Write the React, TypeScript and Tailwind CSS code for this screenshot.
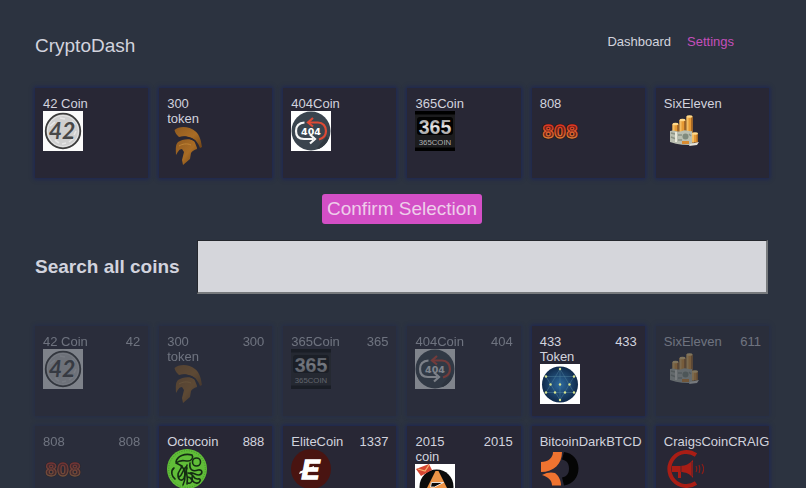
import type { ReactNode } from "react";

type Coin = { name: string; symbol: string; icon: ReactNode; chosen?: boolean };

function FortyTwo() {
  return (
    <svg viewBox="0 0 40 40" className="block size-10" aria-hidden="true">
      <rect width="40" height="40" fill="#fbfbfb" />
      <circle cx="20" cy="20" r="17.3" fill="#cfcfcf" stroke="#3c3c3c" strokeWidth="1.8" />
      <circle cx="20" cy="20" r="15.6" fill="none" stroke="#e8e8e8" strokeWidth="0.8" />
      <path d="M7 15l5-4M12 29l4 3M26 31l5-4M29 10l3 4M17 7l5 1M19 33l4-1M33 20l-2 4" stroke="#e6e6e6" strokeWidth="1.6" />
      <text x="19" y="28" textAnchor="middle" fontFamily="Lato, 'Liberation Sans', sans-serif" fontStyle="italic" fontWeight="700" fontSize="23" fill="#484848">42</text>
    </svg>
  );
}

function Spartan() {
  return (
    <svg viewBox="0 0 40 40" className="block size-10" aria-hidden="true">
      <defs>
        <linearGradient id="bronze" x1="0" y1="0" x2="1" y2="1">
          <stop offset="0" stopColor="#8f5a20" />
          <stop offset="0.55" stopColor="#a96c25" />
          <stop offset="1" stopColor="#6d4215" />
        </linearGradient>
      </defs>
      <path d="M7.500 4C12 0 22 0 28 5c5 4 6 10 7 16l-2 1c-2-5-4-8-8-10-5-2-9-2-13-1C10 9 8 7 7.500 4z" fill="url(#bronze)" />
      <path d="M9 29c0-5-1-10 2-13 4-3 12-4 16-1 3 2 3 5 3 8-3 1-5 2-6 4l-1 6-7 6-1-5 2-8-2-3c-3 0-4 3-6 6z" fill="url(#bronze)" />
      <path d="M12 20c3-2 8-3 12-1" stroke="#c58a3a" strokeWidth="0.8" fill="none" />
      <path d="M10 13c6-3 13-2 18 2l3 7" stroke="#282735" strokeWidth="1.500" fill="none" />
    </svg>
  );
}

function NotFound() {
  return (
    <svg viewBox="0 0 40 40" className="block size-10" aria-hidden="true">
      <rect width="40" height="40" fill="#ffffff" />
      <circle cx="20" cy="20" r="19.500" fill="#3a444e" />
      <path d="M26 37l10-12 1 4a19 19 0 0 1-9 9z" fill="#303840" />
      <path d="M13.500 11.500C7 12 5 16 5 20c0 5 3 8 8 8h9" fill="none" stroke="#f5f5f5" strokeWidth="2.200" />
      <path d="M19 23.500l5 4.500-5 4.500" fill="none" stroke="#f5f5f5" strokeWidth="2.200" />
      <path d="M17 11.500h10c5 0 8 4 8 8.500 0 4-2 7-7 8.500" fill="none" stroke="#df4a35" strokeWidth="2.200" />
      <path d="M22 7l-5 4.500 5 4" fill="none" stroke="#df4a35" strokeWidth="2.200" />
      <text x="20" y="23.500" textAnchor="middle" fontFamily="'DejaVu Sans', sans-serif" fontWeight="700" fontSize="9.500" fill="#ffffff">404</text>
    </svg>
  );
}

function ThreeSixFive() {
  return (
    <svg viewBox="0 0 40 40" className="block size-10" aria-hidden="true">
      <defs>
        <linearGradient id="steel" x1="0" y1="0" x2="0" y2="1">
          <stop offset="0" stopColor="#777777" />
          <stop offset="0.500" stopColor="#e6e6e6" />
          <stop offset="1" stopColor="#858585" />
        </linearGradient>
      </defs>
      <rect width="40" height="40" fill="#000000" />
      <rect y="3.500" width="40" height="33" fill="#1c1c1e" />
      <rect x="2" y="6" width="36" height="18" rx="3" fill="#030303" />
      <text x="20" y="22.500" textAnchor="middle" fontFamily="'Liberation Sans', Arial, sans-serif" fontWeight="700" fontSize="19.500" fill="url(#steel)">365</text>
      <text x="20" y="33.500" textAnchor="middle" fontFamily="'Liberation Sans', Arial, sans-serif" fontSize="7.800" fill="#b0b0b0">365COIN</text>
    </svg>
  );
}

function EightOhEight() {
  return (
    <svg viewBox="0 0 40 40" className="block size-10" aria-hidden="true">
      <defs>
        <linearGradient id="ember" gradientUnits="userSpaceOnUse" x1="0" y1="13" x2="0" y2="27">
          <stop offset="0" stopColor="#dc3022" />
          <stop offset="1" stopColor="#d97d36" />
        </linearGradient>
      </defs>
      <g fontFamily="'DejaVu Sans', sans-serif" fontWeight="700" fontSize="17" textAnchor="middle" strokeLinejoin="round">
        <text x="20" y="26.500" fill="#241312" stroke="#241312" strokeWidth="2.500">808</text>
        <text x="20" y="26.500" fill="#6b2118" stroke="url(#ember)" strokeWidth="1.300">808</text>
      </g>
    </svg>
  );
}

function Stacks() {
  return (
    <svg viewBox="0 0 40 40" className="block size-10" aria-hidden="true">
      {[
        [8.5, 13, 10],
        [15.5, 9, 15],
        [22.5, 5.5, 20],
        [28, 22.5, 9],
      ].map(([x, y, h]) => (
        <g key={x}>
          <rect x={x} y={y} width="6" height={h} fill="#e79a34" />
          <rect x={x} y={y} width="2" height={h} fill="#f3bd63" />
          <rect x={x + 4.5} y={y} width="1.500" height={h} fill="#aa6923" />
          <ellipse cx={x + 3} cy={y} rx="3" ry="1.200" fill="#ffd98a" />
        </g>
      ))}
      <path d="M6 20c5-2 7 2 12 0 4-2 6 1 10 0v12l5 1-3 1c-8 0-16 0-24-3z" fill="#b9beb0" />
      <path d="M7 22l4 1M7 26l5 2M14 24h4M14 29h4M25 23l2 2" stroke="#8b9285" strokeWidth="1.500" />
      <path d="M12 21v10" stroke="#efeee0" strokeWidth="1.800" />
      <circle cx="21.500" cy="25.500" r="3" fill="#7f8a7d" />
      <path d="M18 30h7v3h-7z" fill="#d98c31" />
      <path d="M26 33l9-2-2 3-8 1z" fill="#e4e2da" />
    </svg>
  );
}

function Constellation() {
  const points = [[20, 5], [6, 12.5], [34, 12.5], [10.5, 20.5], [20, 20.5], [29.5, 20.5], [6, 28.5], [15, 28.5], [25, 28.5], [34, 28.5], [20, 36]];
  return (
    <svg viewBox="0 0 40 40" className="block size-10" aria-hidden="true">
      <defs>
        <radialGradient id="space">
          <stop offset="0" stopColor="#2e6a9d" />
          <stop offset="1" stopColor="#102b4c" />
        </radialGradient>
      </defs>
      <rect width="40" height="40" fill="#ffffff" />
      <circle cx="20" cy="20.500" r="18" fill="url(#space)" />
      <path d="M20 5L6 28.500h28zM6 12.500h28L20 36zM20 5v31" fill="none" stroke="#4a7c98" strokeWidth="0.500" />
      {points.map(([x, y]) => (
        <circle key={`${x}-${y}`} cx={x} cy={y} r="1.200" fill="#d8e58e" />
      ))}
    </svg>
  );
}

function Octopus() {
  return (
    <svg viewBox="0 0 40 40" className="block size-10" aria-hidden="true">
      <circle cx="20" cy="20" r="20" fill="#60bd38" />
      <circle cx="20" cy="20" r="18.300" fill="none" stroke="#3c8428" strokeWidth="0.800" strokeDasharray="1 1.500" />
      <g fill="none" stroke="#142c13" strokeWidth="1.600" strokeLinecap="round" strokeLinejoin="round">
        <path d="M9 13c1-6 9-9 16-7 2 3-1 6-4 6-5 0-7-2-12 2l6 3c-1 4-4 5-4 9 0 5 4 7 6 3l3-10" />
        <path d="M7 19c-4 3-2 9 1 11M14 17c5 3 5 13 2 19M20 16c-3 7 2 9 0 19" />
        <circle cx="29.500" cy="13" r="4" />
        <path d="M23 14c-1 7 3 9 8 7 5-1 5 4 1 5-4 0-6-3-9-2M21 24c6 0 5 7 10 6 4-1 2 5-2 4-4 0-4-6-8-6M12 28c4-2 3-7 7-10M25 28c1 4-1 7-4 6" />
      </g>
    </svg>
  );
}

function Elite() {
  return (
    <svg viewBox="0 0 40 40" className="block size-10" aria-hidden="true">
      <circle cx="20" cy="20" r="20" fill="#491411" />
      <text x="19.500" y="29.500" textAnchor="middle" fontFamily="'Liberation Sans', Arial, sans-serif" fontStyle="italic" fontWeight="700" fontSize="27" fill="#ffffff" stroke="#ffffff" strokeWidth="1.400">E</text>
      <path d="M9 22.500L23 17v3L8 25z" fill="#ffffff" />
    </svg>
  );
}

function TwentyFifteen() {
  return (
    <svg viewBox="0 0 40 40" className="block size-10" aria-hidden="true">
      <rect width="40" height="40" fill="#ffffff" />
      <circle cx="21.500" cy="22.500" r="17" fill="#0b0b0b" />
      <path d="M20.500 7h3L36 32H8z" fill="#ec9346" />
      <path d="M16.500 18.500h12l-9 4.500h-4z" fill="#0b0b0b" stroke="#ffffff" strokeWidth="0.800" />
      <path d="M1 5l13-5 3 6-11 6z" fill="#d64632" />
      <path d="M3 5l7 2 4-6" fill="none" stroke="#f5b06a" strokeWidth="1.300" />
    </svg>
  );
}

function BitcoinDark() {
  return (
    <svg viewBox="0 0 40 40" className="block size-10" aria-hidden="true">
      <path d="M24 3c9 1 14.500 8 14.500 16.500S33 35 24 36.500l-2-8c5-1 7-4 7-9s-2-8-7-9z" fill="#050505" />
      <path d="M13 3h9c0 12-8 20-21 20V13C8 13 13 9 13 3z" fill="#ef7330" />
      <path d="M2 26c5-3 10-3 13-2 4 3 6 8 6 12.500H12C12 31 8 28 2 26z" fill="#ef7330" />
    </svg>
  );
}

function Megaphone() {
  return (
    <svg viewBox="0 0 40 40" className="block size-10" aria-hidden="true">
      <path d="M32 6a17 17 0 1 0 0 28" fill="none" stroke="#a91d15" strokeWidth="4" />
      <path d="M10 17h6c6 0 10-3 13-6v18c-3-4-7-6-13-6h-6z" fill="#a91d15" />
      <path d="M14 22h3v7h-3zM8 17h2v6H8z" fill="#a91d15" />
      <path d="M17 17v6M28 13v14" stroke="#282735" strokeWidth="0.600" />
      <path d="M32 17c1 2 1 4 0 6M35 16c1 2.500 1 5.500 0 8M38 15c2 3 2 7 0 10" fill="none" stroke="#8d1d19" strokeWidth="1.100" />
    </svg>
  );
}

const selected: Coin[] = [
  { name: "42 Coin", symbol: "", icon: <FortyTwo /> },
  { name: "300 token", symbol: "", icon: <Spartan /> },
  { name: "404Coin", symbol: "", icon: <NotFound /> },
  { name: "365Coin", symbol: "", icon: <ThreeSixFive /> },
  { name: "808", symbol: "", icon: <EightOhEight /> },
  { name: "SixEleven", symbol: "", icon: <Stacks /> },
];

const coins: Coin[] = [
  { name: "42 Coin", symbol: "42", icon: <FortyTwo />, chosen: true },
  { name: "300 token", symbol: "300", icon: <Spartan />, chosen: true },
  { name: "365Coin", symbol: "365", icon: <ThreeSixFive />, chosen: true },
  { name: "404Coin", symbol: "404", icon: <NotFound />, chosen: true },
  { name: "433 Token", symbol: "433", icon: <Constellation /> },
  { name: "SixEleven", symbol: "611", icon: <Stacks />, chosen: true },
  { name: "808", symbol: "808", icon: <EightOhEight />, chosen: true },
  { name: "Octocoin", symbol: "888", icon: <Octopus /> },
  { name: "EliteCoin", symbol: "1337", icon: <Elite /> },
  { name: "2015 coin", symbol: "2015", icon: <TwentyFifteen /> },
  { name: "BitcoinDark", symbol: "BTCD", icon: <BitcoinDark /> },
  { name: "CraigsCoin", symbol: "CRAIG", icon: <Megaphone /> },
];

function CoinGrid({ items, label }: { items: Coin[]; label: string }) {
  return (
    <section aria-label={label} className="grid auto-rows-[90px] grid-cols-6 gap-x-[11px] gap-y-2.5">
      {items.map((coin) => (
        <button
          key={coin.name}
          type="button"
          disabled={coin.chosen}
          className="flex flex-col items-stretch justify-start bg-[#282735] p-2 text-left text-[13px] leading-[15px] shadow-[0_0_4px_1px_#1c2554] disabled:opacity-40"
        >
          <span className="grid grid-cols-[1fr_1fr]">
            <span>{coin.name}</span>
            <span className="text-right">{coin.symbol}</span>
          </span>
          {coin.icon}
        </button>
      ))}
    </section>
  );
}

export default function App() {
  return (
    <div className="h-screen overflow-hidden bg-[#2c3340] pr-[37px] pl-[35px] font-['Liberation_Sans',Arial,sans-serif] text-[#d2d3de]">
      <header className="flex items-start justify-between pt-8 pb-7">
        <h1 className="text-[19px] leading-7">CryptoDash</h1>
        <nav className="mr-[35px] flex gap-4 text-[13px] leading-5">
          <a href="#dashboard">Dashboard</a>
          <a href="#settings" aria-current="page" className="text-[#c44fbb]">
            Settings
          </a>
        </nav>
      </header>
      <main>
        <CoinGrid items={selected} label="Selected coins" />
        <div className="flex justify-center pt-4 pb-4">
          <button type="button" className="rounded-[3px] bg-[#d34fc6] px-[5px] text-[19px] leading-[30px] text-[#eecdea]">
            Confirm Selection
          </button>
        </div>
        <div className="mr-px flex items-center pb-8">
          <label htmlFor="coin-search" className="w-[162px] shrink-0 text-[19px] leading-6 font-bold">
            Search all coins
          </label>
          <input
            id="coin-search"
            type="text"
            className="h-[54px] min-w-0 flex-1 border border-r-2 border-b-2 border-t-[#24272d] border-r-[#777a7d] border-b-[#777a7d] border-l-[#24272d] bg-[#d5d6db] px-2 text-[19px] text-[#22232e] outline-none"
          />
        </div>
        <CoinGrid items={coins} label="All coins" />
      </main>
    </div>
  );
}
